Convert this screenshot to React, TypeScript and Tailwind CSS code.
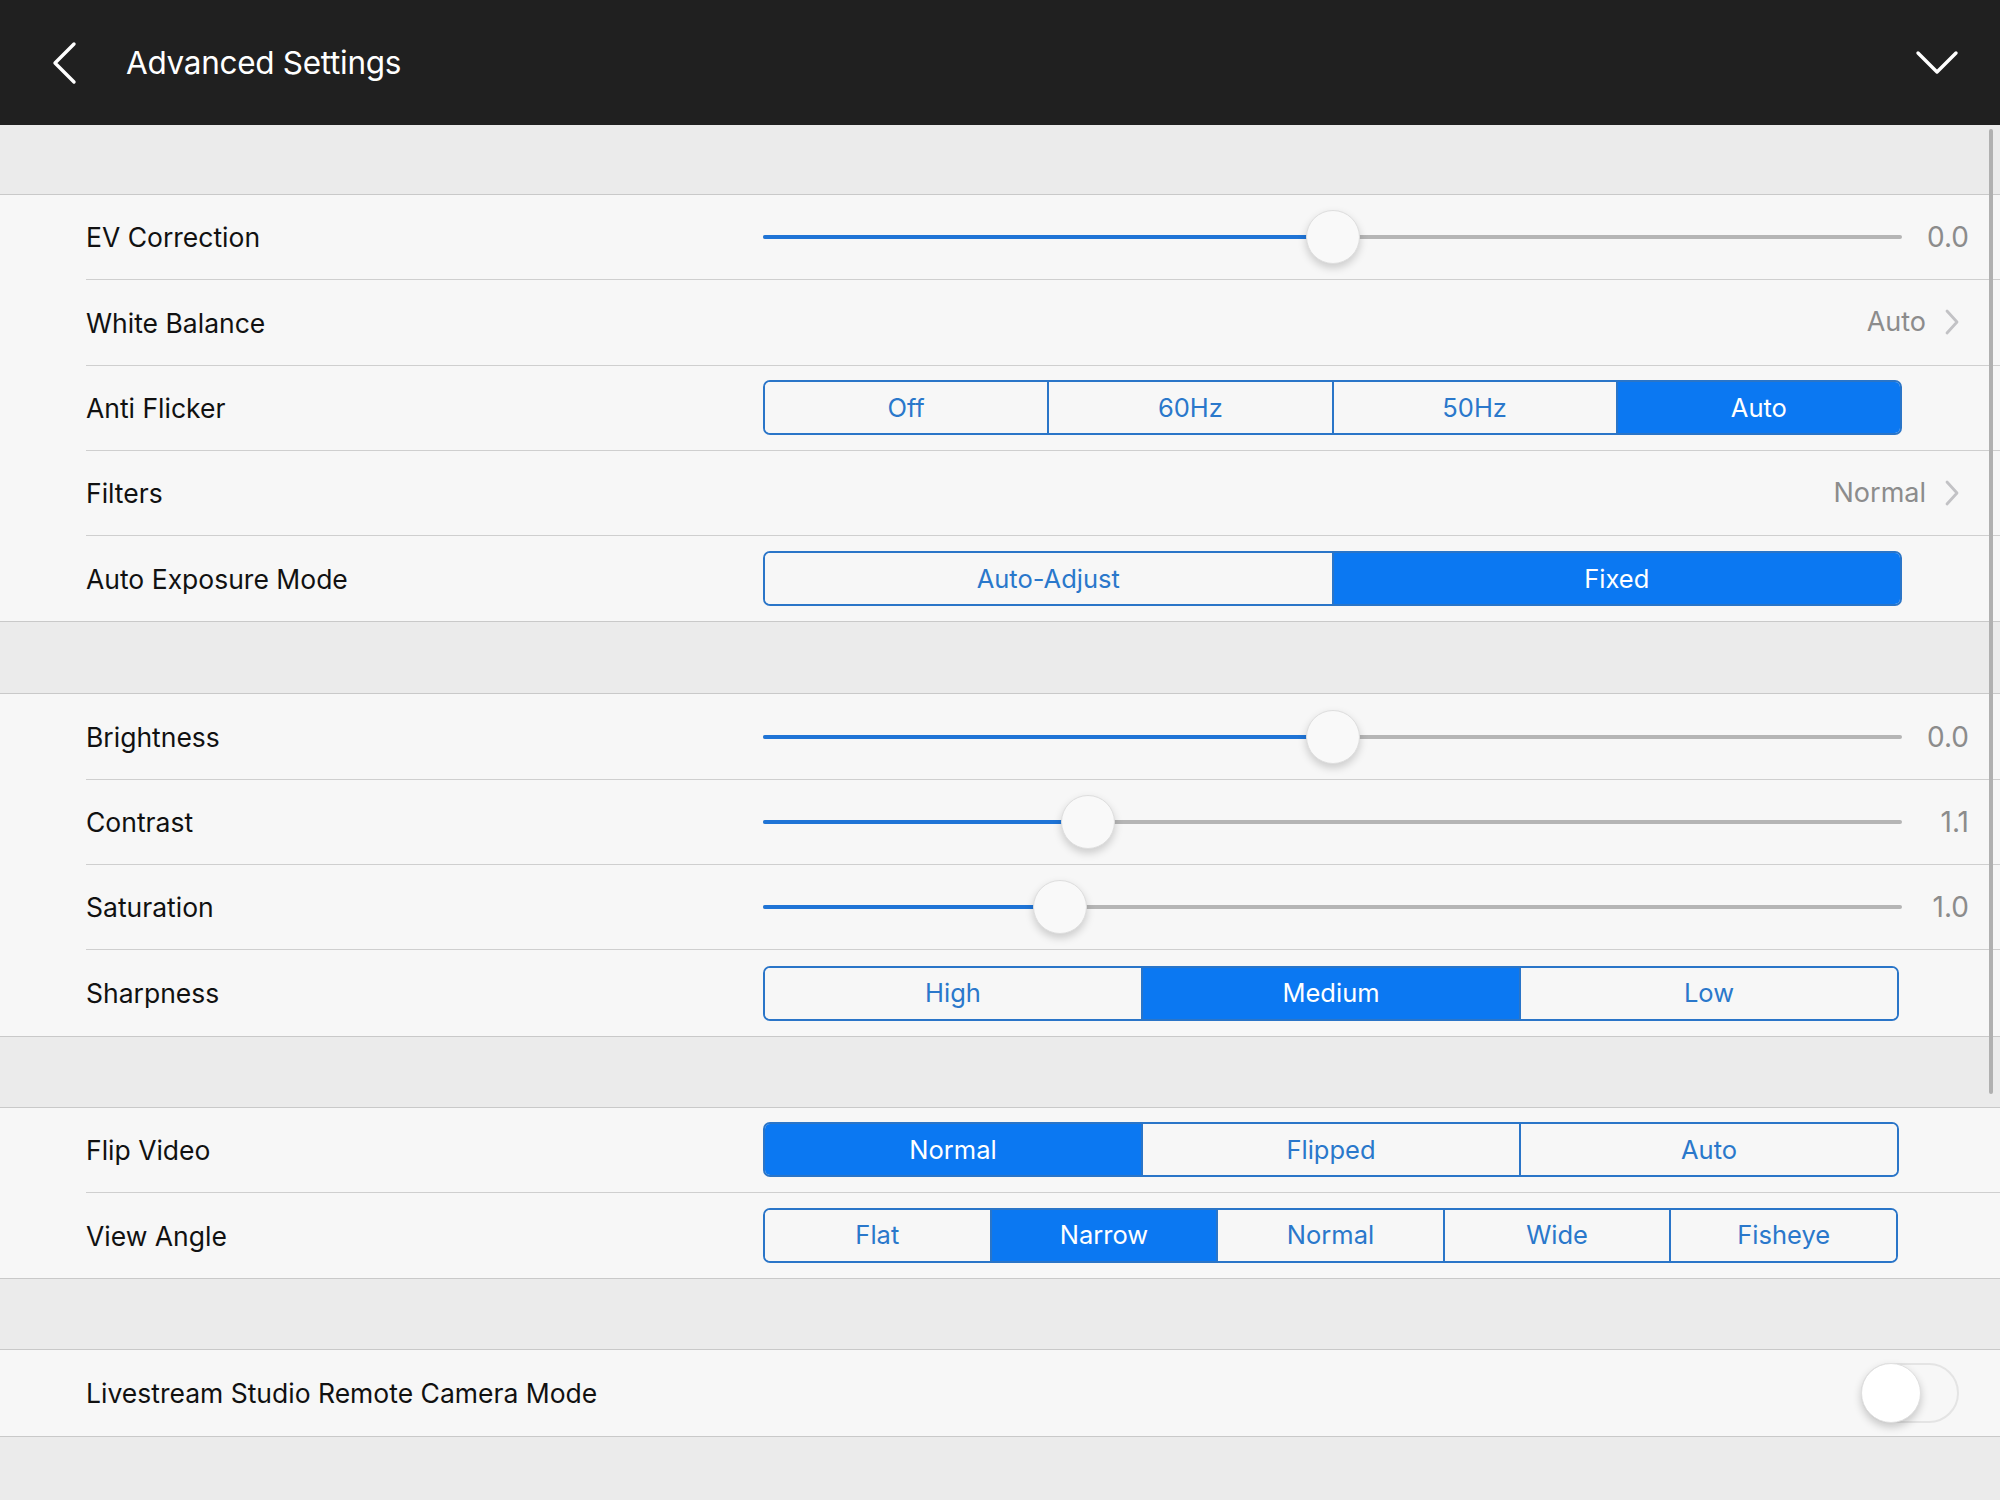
import React from "react";

type Row =
  | { kind: "slider"; label: string; value: string; pos: number }
  | { kind: "link"; label: string; value: string }
  | { kind: "segment"; label: string; options: string[]; active: number; width: string }
  | { kind: "toggle"; label: string };

const groups: Row[][] = [
  [
    { kind: "slider", label: "EV Correction", value: "0.0", pos: 0.5 },
    { kind: "link", label: "White Balance", value: "Auto" },
    { kind: "segment", label: "Anti Flicker", options: ["Off", "60Hz", "50Hz", "Auto"], active: 3, width: "w-[1139px]" },
    { kind: "link", label: "Filters", value: "Normal" },
    { kind: "segment", label: "Auto Exposure Mode", options: ["Auto-Adjust", "Fixed"], active: 1, width: "w-[1139px]" },
  ],
  [
    { kind: "slider", label: "Brightness", value: "0.0", pos: 0.5 },
    { kind: "slider", label: "Contrast", value: "1.1", pos: 0.285 },
    { kind: "slider", label: "Saturation", value: "1.0", pos: 0.261 },
    { kind: "segment", label: "Sharpness", options: ["High", "Medium", "Low"], active: 1, width: "w-[1136px]" },
  ],
  [
    { kind: "segment", label: "Flip Video", options: ["Normal", "Flipped", "Auto"], active: 0, width: "w-[1136px]" },
    { kind: "segment", label: "View Angle", options: ["Flat", "Narrow", "Normal", "Wide", "Fisheye"], active: 1, width: "w-[1135px]" },
  ],
  [{ kind: "toggle", label: "Livestream Studio Remote Camera Mode" }],
];

function Slider({ pos, value }: { pos: number; value: string }) {
  return (
    <>
      <div className="relative w-[1139px] h-[56px]">
        <div className="absolute left-0 right-0 top-[26px] h-[4px] rounded-full bg-[#b5b5b5]" />
        <div className="absolute left-0 top-[26px] h-[4px] rounded-full bg-[#1f74d6]" style={{ width: `${pos * 100}%` }} />
        <div
          className="absolute top-[1px] w-[54px] h-[54px] -ml-[27px] rounded-full bg-[#f9f9f9] border border-[#dedede] shadow-[0_4px_8px_rgba(0,0,0,0.18)]"
          style={{ left: `${pos * 100}%` }}
        />
      </div>
      <div className="flex-1 text-right pr-[31px] text-[28px] text-[#8c8c8c]">{value}</div>
    </>
  );
}

function Segment({ options, active, width }: { options: string[]; active: number; width: string }) {
  return (
    <div className={`${width} h-[55px] flex rounded-[7px] border-2 border-[#2a75c8] overflow-hidden`}>
      {options.map((o, i) => (
        <div
          key={o + i}
          className={
            "flex-1 flex items-center justify-center text-[25.5px] " +
            (i > 0 ? "border-l-2 border-[#2a75c8] " : "") +
            (i === active ? "bg-[#0b78f2] text-white" : "bg-[#f7f7f7] text-[#2a78cb]")
          }
        >
          {o}
        </div>
      ))}
    </div>
  );
}

function RowContent({ row }: { row: Row }) {
  switch (row.kind) {
    case "slider":
      return <Slider pos={row.pos} value={row.value} />;
    case "link":
      return (
        <div className="flex-1 flex items-center justify-end gap-[18px] pr-[40px]">
          <span className="text-[27px] text-[#8c8c8c]">{row.value}</span>
          <svg width="16" height="26" viewBox="0 0 16 26" fill="none">
            <path d="M3 2l10 11L3 24" stroke="#c2c2c5" strokeWidth="2.8" strokeLinecap="round" strokeLinejoin="round" />
          </svg>
        </div>
      );
    case "segment":
      return <Segment options={row.options} active={row.active} width={row.width} />;
    case "toggle":
      return (
        <div className="flex-1 flex justify-end pr-[41px]">
          <div className="relative w-[98px] h-[60px] rounded-full bg-[#f7f7f7] border-2 border-[#e4e4e4]">
            <div className="absolute -left-[2px] -top-[2px] w-[60px] h-[60px] rounded-full bg-white border border-[#e0e0e0] shadow-[0_4px_8px_rgba(0,0,0,0.2)]" />
          </div>
        </div>
      );
  }
}

export default function App() {
  return (
    <div className="relative w-[2000px] h-[1500px] bg-[#ebebeb] overflow-hidden font-['Inter',sans-serif] text-[#111]">
      {/* Header */}
      <div className="h-[125px] bg-[#202020] flex items-center">
        <svg className="ml-[50px]" width="28" height="44" viewBox="0 0 28 44" fill="none">
          <path d="M24 3L5 22l19 19" stroke="white" strokeWidth="3.4" strokeLinecap="round" strokeLinejoin="round" />
        </svg>
        <h1 className="ml-[48px] text-[31.5px] text-white tracking-[-0.3px]">Advanced Settings</h1>
        <svg className="ml-auto mr-[41px]" width="44" height="26" viewBox="0 0 44 26" fill="none">
          <path d="M3 3l19 19L41 3" stroke="white" strokeWidth="3.4" strokeLinecap="round" strokeLinejoin="round" />
        </svg>
      </div>

      {groups.map((g, gi) => (
        <div key={gi}>
          <div className={gi === 0 ? "h-[69px]" : gi === 1 ? "h-[71px]" : "h-[70px]"} />
          <div className="bg-[#f7f7f7] border-y border-[#c9c9c9]">
            {g.map((row, ri) => (
              <div key={row.label} className="pl-[86px]">
                <div
                  className={
                    "flex items-center h-[85.3px] " + (ri < g.length - 1 ? "border-b border-[#cfcfcf]" : "")
                  }
                >
                  <div className="w-[677px] shrink-0 pt-[2px] text-[26.5px] text-[#111]">{row.label}</div>
                  <RowContent row={row} />
                </div>
              </div>
            ))}
          </div>
        </div>
      ))}

      {/* scroll indicator */}
      <div className="absolute left-[1989px] top-[129px] w-[4px] h-[965px] rounded-full bg-[#b0b0b0]" />
    </div>
  );
}
